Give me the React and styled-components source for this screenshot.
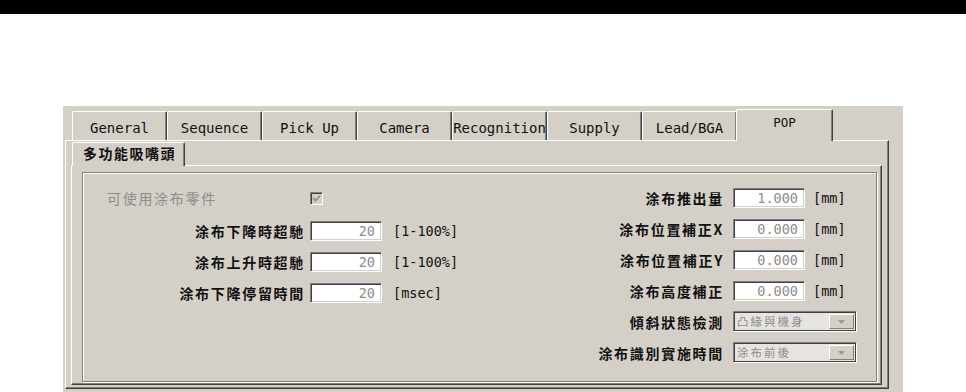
import React from "react";
import styled, { createGlobalStyle } from "styled-components";

const GlobalStyle = createGlobalStyle`
  html, body {
    margin: 0;
    padding: 0;
    background: #ffffff;
    overflow: hidden;
  }
  body {
    font-family: "Noto Sans CJK TC", "Noto Sans", sans-serif;
  }
`;

const CJK = `"Noto Sans CJK TC", "Noto Sans CJK JP", sans-serif`;
const MONO = `"DejaVu Sans Mono", "Liberation Mono", monospace`;

const tabs = [
  "General",
  "Sequence",
  "Pick Up",
  "Camera",
  "Recognition",
  "Supply",
  "Lead/BGA",
  "POP",
];

const leftRows = [
  { label: "涂布下降時超馳", value: "20", unit: "[1-100%]" },
  { label: "涂布上升時超馳", value: "20", unit: "[1-100%]" },
  { label: "涂布下降停留時間", value: "20", unit: "[msec]" },
];

const rightRows = [
  { label: "涂布推出量", value: "1.000", unit: "[mm]" },
  { label: "涂布位置補正X", value: "0.000", unit: "[mm]" },
  { label: "涂布位置補正Y", value: "0.000", unit: "[mm]" },
  { label: "涂布高度補正", value: "0.000", unit: "[mm]" },
  { label: "傾斜狀態檢測", combo: "凸緣與機身" },
  { label: "涂布識別實施時間", combo: "涂布前後" },
];

export default function App() {
  return (
    <>
      <GlobalStyle />
      <TopBar />
      <Window>
        <TabControl>
          <TabRow>
            {tabs.map((t) => (
              <Tab key={t} $active={t === "POP"}>
                {t}
              </Tab>
            ))}
          </TabRow>
          <TabBody>
            <SubTabRow>
              <SubTab>多功能吸嘴頭</SubTab>
            </SubTabRow>
            <SubBody>
              <GroupBox>
                <LeftGrid>
                  <DisabledLabel>可使用涂布零件</DisabledLabel>
                  <CheckBox>
                    <svg width="9" height="9" viewBox="0 0 9 9">
                      <path
                        d="M1 4 L3.5 6.5 L8 2"
                        fill="none"
                        stroke="#8a8a8a"
                        strokeWidth="1.6"
                      />
                    </svg>
                  </CheckBox>
                  <span />
                  {leftRows.map((r) => (
                    <React.Fragment key={r.label}>
                      <Label>{r.label}</Label>
                      <Field>{r.value}</Field>
                      <Unit $left>{r.unit}</Unit>
                    </React.Fragment>
                  ))}
                </LeftGrid>
                <RightGrid>
                  {rightRows.map((r) => (
                    <React.Fragment key={r.label}>
                      <Label>{r.label}</Label>
                      {r.combo ? (
                        <Combo>
                          <ComboText>{r.combo}</ComboText>
                          <ComboButton>
                            <svg width="7" height="4" viewBox="0 0 7 4">
                              <path d="M0 0 H7 L3.5 4 Z" fill="#9a9a9a" />
                            </svg>
                          </ComboButton>
                        </Combo>
                      ) : (
                        <>
                          <Field>{r.value}</Field>
                          <Unit>{r.unit}</Unit>
                        </>
                      )}
                    </React.Fragment>
                  ))}
                </RightGrid>
              </GroupBox>
            </SubBody>
          </TabBody>
        </TabControl>
      </Window>
    </>
  );
}

const TopBar = styled.div`
  height: 14px;
  background: #000000;
`;

const Window = styled.div`
  box-sizing: border-box;
  margin: 92px 0 0 63px;
  width: 840px;
  height: 286px;
  background: #d4d0c8;
  padding: 3px 0 0 2px;
`;

const TabControl = styled.div`
  width: 824px;
`;

const TabRow = styled.div`
  display: flex;
  align-items: flex-end;
  height: 31px;
  padding-left: 7px;
`;

const Tab = styled.div`
  box-sizing: border-box;
  position: relative;
  z-index: ${(p) => (p.$active ? 2 : 0)};
  width: ${(p) => (p.$active ? 97 : 95)}px;
  height: ${(p) => (p.$active ? 32 : 29)}px;
  margin: ${(p) => (p.$active ? "0 -1px -1px -1px" : "0")};
  padding-top: ${(p) => (p.$active ? 5 : 8)}px;
  background: #d4d0c8;
  border-top: 1px solid #ffffff;
  border-left: 1px solid #ffffff;
  border-right: 1px solid #404040;
  box-shadow: inset -1px 0 0 #808080;
  border-radius: 2px 2px 0 0;
  font-family: ${MONO};
  font-size: ${(p) => (p.$active ? 12.5 : 14)}px;
  line-height: 16px;
  color: #111111;
  text-align: center;
  white-space: nowrap;
`;

const TabBody = styled.div`
  box-sizing: border-box;
  height: 249px;
  border-top: 1px solid #ffffff;
  border-left: 1px solid #ffffff;
  border-right: 1px solid #404040;
  border-bottom: 1px solid #404040;
  box-shadow: inset -1px -1px 0 #808080;
  padding: 1px 0 0 5px;
`;

const SubTabRow = styled.div`
  display: flex;
  align-items: flex-end;
  height: 23px;
  padding-left: 1px;
`;

const SubTab = styled.div`
  box-sizing: border-box;
  position: relative;
  z-index: 2;
  height: 24px;
  margin-bottom: -1px;
  width: 113px;
  padding-left: 10px;
  background: #d4d0c8;
  border-top: 1px solid #ffffff;
  border-left: 1px solid #ffffff;
  border-right: 1px solid #404040;
  box-shadow: inset -1px 0 0 #808080;
  border-radius: 2px 2px 0 0;
  font-family: ${CJK};
  font-weight: 700;
  font-size: 14px;
  letter-spacing: 1.5px;
  line-height: 21px;
  color: #111111;
  white-space: nowrap;
`;

const SubBody = styled.div`
  box-sizing: border-box;
  width: 811px;
  height: 220px;
  border-top: 1px solid #ffffff;
  border-left: 1px solid #ffffff;
  border-right: 1px solid #404040;
  border-bottom: 1px solid #404040;
  box-shadow: inset -1px -1px 0 #808080;
  padding: 6px 0 0 10px;
`;

const GroupBox = styled.div`
  box-sizing: border-box;
  width: 795px;
  height: 210px;
  border: 1px solid #808080;
  box-shadow: inset 1px 1px 0 #ffffff, 1px 1px 0 #ffffff;
  display: flex;
  justify-content: space-between;
  padding: 0 19px 0 24px;
`;

const LeftGrid = styled.div`
  display: grid;
  grid-template-columns: 199px 72px auto;
  grid-template-rows: 34px 31px 31px 31px;
  column-gap: 4px;
  align-items: center;
  align-content: start;
  padding-top: 8px;
`;

const RightGrid = styled.div`
  display: grid;
  grid-template-columns: auto 72px 44px;
  grid-auto-rows: 31px;
  column-gap: 8px;
  align-items: center;
  align-content: start;
  padding-top: 9px;
`;

const Label = styled.div`
  font-family: ${CJK};
  font-weight: 700;
  font-size: 14px;
  letter-spacing: 1.7px;
  line-height: 1;
  color: #111111;
  text-align: right;
  white-space: nowrap;
  margin-right: 1px;
`;

const DisabledLabel = styled(Label)`
  font-weight: 400;
  color: #8c8c8c;
  text-align: left;
`;

const CheckBox = styled.div`
  box-sizing: border-box;
  width: 13px;
  height: 13px;
  display: flex;
  align-items: center;
  justify-content: center;
  background: #d4d0c8;
  border-top: 1px solid #808080;
  border-left: 1px solid #808080;
  border-right: 1px solid #ffffff;
  border-bottom: 1px solid #ffffff;
  box-shadow: inset 1px 1px 0 #404040;
`;

const Field = styled.div`
  box-sizing: border-box;
  width: 72px;
  height: 20px;
  background: #ffffff;
  border-top: 1px solid #808080;
  border-left: 1px solid #808080;
  border-right: 1px solid #ffffff;
  border-bottom: 1px solid #ffffff;
  box-shadow: inset 1px 1px 0 #404040, inset -1px -1px 0 #d4d0c8;
  padding-right: 6px;
  font-family: ${MONO};
  font-size: 13.5px;
  line-height: 18px;
  color: #8c8c8c;
  text-align: right;
`;

const Unit = styled.div`
  margin-left: ${(p) => (p.$left ? 7 : 0)}px;
  padding-top: 2px;
  font-family: ${MONO};
  font-size: 13.5px;
  line-height: 1;
  color: #111111;
  white-space: nowrap;
`;

const Combo = styled.div`
  grid-column: span 2;
  box-sizing: border-box;
  width: 124px;
  height: 21px;
  display: flex;
  align-items: center;
  justify-content: space-between;
  background: #e6e4df;
  border-top: 1px solid #808080;
  border-left: 1px solid #808080;
  border-right: 1px solid #ffffff;
  border-bottom: 1px solid #ffffff;
  box-shadow: inset 1px 1px 0 #404040, inset -1px -1px 0 #404040;
  padding: 0 2px 0 3px;
`;

const ComboText = styled.span`
  font-family: ${CJK};
  font-size: 11.5px;
  letter-spacing: 2px;
  line-height: 1;
  color: #8c8c8c;
  white-space: nowrap;
`;

const ComboButton = styled.div`
  box-sizing: border-box;
  width: 25px;
  height: 15px;
  display: flex;
  align-items: center;
  justify-content: center;
  background: #d4d0c8;
  border-top: 1px solid #ffffff;
  border-left: 1px solid #ffffff;
  border-right: 1px solid #808080;
  border-bottom: 1px solid #808080;
`;
